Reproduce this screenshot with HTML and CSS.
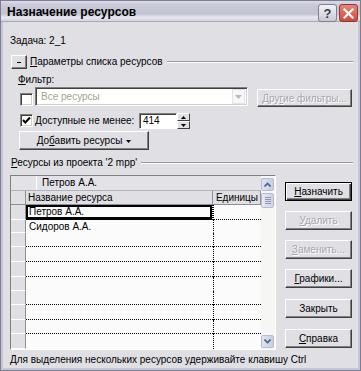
FILE: index.html
```html
<!DOCTYPE html>
<html>
<head>
<meta charset="utf-8">
<link rel="stylesheet" href="styles.css">
</head>
<body>
<div class="window">
  <div class="titlebar">
    <span class="title">Назначение ресурсов</span>
    <div class="tbtns">
      <span class="tbtn help">?</span>
      <span class="tbtn close"><svg width="11" height="11" viewBox="0 0 11 11"><path d="M1.5 1.5 L9.5 9.5 M9.5 1.5 L1.5 9.5" stroke="#fff" stroke-width="2.2" stroke-linecap="square"/></svg></span>
    </div>
  </div>
  <div class="content">
    <div class="task">Задача: 2_1</div>
    <div class="ghead params">
      <span class="tog"><span class="minus"></span></span>
      <span class="glabel"><u>П</u>араметры списка ресурсов</span>
      <span class="gline"></span>
    </div>
    <div class="flabel"><u>Ф</u>ильтр:</div>
    <div class="frow">
      <span class="chk"></span>
      <div class="combo">
        <span class="ctext">Все ресурсы</span>
        <span class="cbtn"><svg width="7" height="4" viewBox="0 0 7 4"><path d="M0 0 H7 L3.5 4 Z" fill="#b8b7bf"/></svg></span>
      </div>
      <span class="btn dis other"><span>Дру<u>г</u>ие фильтры...</span></span>
    </div>
    <div class="arow">
      <span class="chk"><svg width="11" height="11" viewBox="0 0 11 11"><path d="M2 5 L4.3 7.5 L9 2.5" stroke="#000" stroke-width="2" fill="none"/></svg></span>
      <span class="alabel"><u>Д</u>оступные не менее:</span>
      <div class="spin">
        <span class="sval">414</span>
        <div class="sbtns">
          <span class="sb"><svg width="5" height="3" viewBox="0 0 5 3"><path d="M0 3 H5 L2.5 0 Z" fill="#000"/></svg></span>
          <span class="sb"><svg width="5" height="3" viewBox="0 0 5 3"><path d="M0 0 H5 L2.5 3 Z" fill="#000"/></svg></span>
        </div>
      </div>
    </div>
    <span class="btn add"><span>До<u>б</u>авить ресурсы</span><svg class="tri" width="5" height="3" viewBox="0 0 5 3"><path d="M0 0 H5 L2.5 3 Z" fill="#000"/></svg></span>
    <div class="ghead res">
      <span class="glabel"><u>Р</u>есурсы из проекта '2 mpp'</span>
      <span class="gline"></span>
    </div>
    <div class="main">
      <div class="gridbox">
        <div class="grid">
          <div class="editbar">
            <span class="ebcorner"></span>
            <span class="ebtext">Петров А.А.</span>
          </div>
          <div class="table">
            <div class="rh hdr"></div>
            <div class="ch name">Название ресурса</div>
            <div class="ch units"><span>Единицы</span></div>

            <div class="rh"></div>
            <div class="cell name sel">Петров А.А.</div>
            <div class="cell units"></div>

            <div class="rh"></div>
            <div class="cell name nl">Сидоров А.А.</div>
            <div class="cell units nl"></div>

            <div class="rh"></div>
            <div class="cell name"></div>
            <div class="cell units"></div>

            <div class="rh"></div>
            <div class="cell name"></div>
            <div class="cell units"></div>

            <div class="rh"></div>
            <div class="cell name"></div>
            <div class="cell units"></div>

            <div class="rh"></div>
            <div class="cell name nl"></div>
            <div class="cell units nl"></div>

            <div class="rh"></div>
            <div class="cell name"></div>
            <div class="cell units"></div>

            <div class="rh"></div>
            <div class="cell name"></div>
            <div class="cell units"></div>

            <div class="rh"></div>
            <div class="cell name"></div>
            <div class="cell units"></div>

            <div class="rh last"></div>
            <div class="cell name last"></div>
            <div class="cell units last"></div>
          </div>
        </div>
        <div class="vscroll">
          <span class="sbtn up"><svg width="7" height="5" viewBox="0 0 7 5"><path d="M0.5 4.5 L3.5 1.5 L6.5 4.5" stroke="#4d6185" stroke-width="1.6" fill="none"/></svg></span>
          <span class="thumb"><span class="grip"></span></span>
          <span class="track"></span>
          <span class="sbtn down"><svg width="7" height="5" viewBox="0 0 7 5"><path d="M0.5 0.5 L3.5 3.5 L6.5 0.5" stroke="#4d6185" stroke-width="1.6" fill="none"/></svg></span>
        </div>
      </div>
      <div class="side">
        <span class="btn def"><span><u>Н</u>азначить</span></span>
        <span class="btn dis"><span><u>У</u>далить</span></span>
        <span class="btn dis"><span><u>З</u>аменить...</span></span>
        <span class="btn"><span><u>Г</u>рафики...</span></span>
        <span class="btn late"><span>Закрыть</span></span>
        <span class="btn late"><span><u>С</u>правка</span></span>
      </div>
    </div>
    <div class="status">Для выделения нескольких ресурсов удерживайте клавишу Ctrl</div>
  </div>
</div>
</body>
</html>
```

FILE: styles.css
```css
* { box-sizing: border-box; }
html, body { margin: 0; padding: 0; background: #e0dfe3; }
body {
  font-family: "Liberation Sans", Arial, sans-serif;
  font-size: 10px;
  color: #000;
}
u { text-decoration: underline; text-underline-offset: 1px; }

.window {
  width: 361px;
  height: 371px;
  background: #e0dfe3;
  border: 1px solid #7c7c94;
  box-shadow: inset 2px 0 #c6c6d4, inset -2px 0 #c6c6d4, inset 0 -2px #c6c6d4;
  padding: 0 2px 2px 2px;
  overflow: hidden;
  display: flex;
  flex-direction: column;
}

.titlebar {
  height: 21px;
  margin: 0 -2px;
  padding: 0 2px 0 6px;
  display: flex;
  align-items: center;
  background: linear-gradient(to bottom, #dcdce6 0%, #c9cad8 20%, #c3c4d3 65%, #e8e8ee 82%, #d4d4df 100%);
  border-bottom: 1px solid #a8a8bb;
}
.title {
  font-weight: bold;
  font-size: 12px;
  color: #000;
  flex: 1;
  padding-top: 2px;
}
.tbtns { display: flex; gap: 2px; align-self: flex-start; margin-top: 3px; }
.tbtn {
  width: 19px;
  height: 18px;
  border-radius: 3px;
  display: flex;
  align-items: center;
  justify-content: center;
}
.help {
  background: linear-gradient(to bottom, #f4f4f6, #c9c9d4);
  border: 1px solid #7e7e95;
  font-weight: bold;
  font-size: 13px;
  color: #3b3b4e;
}
.close {
  background: linear-gradient(to bottom, #e8857a, #cf4a3c);
  border: 1px solid #8d3a33;
}

.content {
  flex: 1;
  padding: 0 3px 0 7px;
  display: flex;
  flex-direction: column;
  align-items: flex-start;
}

.task { margin-top: 13px; height: 12px; line-height: 12px; }

.ghead {
  align-self: stretch;
  display: flex;
  align-items: center;
  height: 15px;
}
.params { margin-top: 7px; }
.tog {
  width: 16px;
  height: 14px;
  margin: 1px 3px 0 1px;
  background: #e0dfe3;
  border: 1px solid;
  border-color: #fff #404040 #404040 #fff;
  box-shadow: inset -1px -1px #808080;
  display: flex;
  align-items: center;
  justify-content: center;
}
.minus { width: 4px; height: 1px; background: #000; }
.glabel { white-space: nowrap; }
.gline {
  flex: 1;
  height: 2px;
  margin: 1px 2px 0 4px;
  border-top: 1px solid #9a99a0;
  border-bottom: 1px solid #fff;
}
.res { margin-top: 6px; height: 12px; padding-left: 1px; }

.flabel { margin-top: 5px; margin-left: 8px; height: 12px; line-height: 12px; }

.frow {
  margin-top: 1px;
  height: 20px;
  display: flex;
  align-items: flex-start;
  margin-left: 10px;
}
.chk {
  width: 13px;
  height: 13px;
  background: #fff;
  border: 1px solid;
  border-color: #808080 #fff #fff #808080;
  box-shadow: inset 1px 1px #404040, inset -1px -1px #d4d0c8;
  display: flex;
  align-items: center;
  justify-content: center;
}
.frow .chk { margin-top: 6px; }
.combo {
  margin-left: 2px;
  width: 213px;
  height: 19px;
  background: #fff;
  border: 1px solid;
  border-color: #808080 #fff #fff #808080;
  box-shadow: inset 1px 1px #404040, inset -1px -1px #d4d0c8;
  display: flex;
  align-items: center;
  padding: 2px;
}
.ctext { flex: 1; color: #a4a48f; padding-left: 3px; }
.cbtn {
  width: 13px;
  height: 15px;
  border: 1px solid #e4e3e8;
  background: #f7f7f9;
  display: flex;
  align-items: center;
  justify-content: center;
}
.btn {
  display: flex;
  align-items: center;
  justify-content: center;
  height: 19px;
  background: #e0dfe3;
  border: 1px solid;
  border-color: #fff #404040 #404040 #fff;
  box-shadow: inset -1px -1px #808080;
  white-space: nowrap;
}
.btn.dis { color: #a7a6ad; text-shadow: 1px 1px #fff; }
.other { margin-left: 9px; margin-top: 2px; width: 95px; height: 18px; }

.arow {
  margin-top: 6px;
  margin-left: 10px;
  height: 17px;
  display: flex;
  align-items: flex-start;
}
.arow .chk { margin-top: 1px; }
.alabel { margin-left: 2px; width: 104px; line-height: 16px; white-space: nowrap; }
.spin { display: flex; height: 16px; }
.sval {
  width: 38px;
  height: 16px;
  background: #fff;
  border: 1px solid;
  border-color: #808080 #fff #fff #808080;
  box-shadow: inset 1px 1px #404040;
  padding-left: 3px;
  line-height: 14px;
}
.sbtns { display: flex; flex-direction: column; width: 13px; }
.sb {
  height: 8px;
  background: #e0dfe3;
  border: 1px solid;
  border-color: #fff #404040 #404040 #fff;
  display: flex;
  align-items: center;
  justify-content: center;
}
.add { margin-top: 1px; margin-left: 9px; width: 130px; gap: 4px; }
.tri { margin-top: 1px; }

.main {
  margin-top: 7px;
  display: flex;
  align-items: flex-start;
  height: 175px;
}
.gridbox {
  width: 266px;
  height: 175px;
  border: 1px solid;
  border-color: #808080 #fff #fff #808080;
  display: flex;
  background: #fbfbfb;
}
.grid { width: 250px; display: flex; flex-direction: column; }
.editbar {
  height: 15px;
  display: flex;
  background: #e3e2e7;
  border-bottom: 1px solid #b4b3b9;
}
.ebcorner { width: 26px; border-right: 1px solid #fff; }
.ebtext { padding-left: 5px; line-height: 14px; }

.table {
  display: grid;
  grid-template-columns: 15px 187px 48px;
  grid-template-rows: 14px 15px 13px 14px 15px 15px 14px 14px 15px 14px 15px;
}
.rh {
  background: #e0dfe3;
  border-right: 1px solid #8f8e95;
  border-bottom: 1px solid #fff;
}
.rh.hdr { border-bottom: 1px solid #8f8e95; }
.ch {
  background: #e0dfe3;
  border-bottom: 1px solid #8f8e95;
  line-height: 13px;
  white-space: nowrap;
  overflow: hidden;
}
.ch.name { padding-left: 2px; border-right: 1px solid #8f8e95; }
.ch.units { display: flex; justify-content: flex-end; padding-right: 2px; border-right: 1px solid #8f8e95; }
.cell {
  background: #fbfbfb;
  border-bottom: 1px dotted #000;
  line-height: 13px;
  white-space: nowrap;
  padding-left: 3px;
}
.cell.units { border-left: 1px dotted #000; padding-left: 0; }
.cell.name.sel { box-shadow: inset 0 0 0 2px #000; border-bottom: 1px solid #000; border-right: 1px dotted #000; }
.cell.nl { border-bottom-color: transparent; }
.cell.last { border-bottom: none; }

.vscroll {
  width: 14px;
  display: flex;
  flex-direction: column;
  background: #f6f6f4;
  padding: 2px 1px 1px 0;
}
.sbtn {
  height: 13px;
  border: 1px solid #b9bacb;
  border-radius: 2px;
  background: linear-gradient(to right, #dde3f2, #c6cee4);
  display: flex;
  align-items: center;
  justify-content: center;
}
.thumb {
  margin-top: 2px;
  height: 15px;
  border: 1px solid #b9bacb;
  border-radius: 2px;
  background: linear-gradient(to right, #e6e9f4, #cdd3e6);
  display: flex;
  align-items: center;
  justify-content: center;
}
.grip {
  width: 6px;
  height: 7px;
  background: repeating-linear-gradient(to bottom, #8f97b5 0 1px, transparent 1px 2px);
}
.track { flex: 1; }

.side {
  margin-left: 9px;
  padding-top: 7px;
  display: flex;
  flex-direction: column;
  gap: 10px;
  width: 67px;
}
.side .btn { width: 67px; }
.btn.def {
  border: 1px solid #000;
  box-shadow: inset 1px 1px #fff, inset -1px -1px #404040, inset -2px -2px #808080;
}
.btn.late { margin-top: 1px; }

.status {
  margin-top: 4px;
  height: 12px;
  line-height: 12px;
  white-space: nowrap;
}
```
